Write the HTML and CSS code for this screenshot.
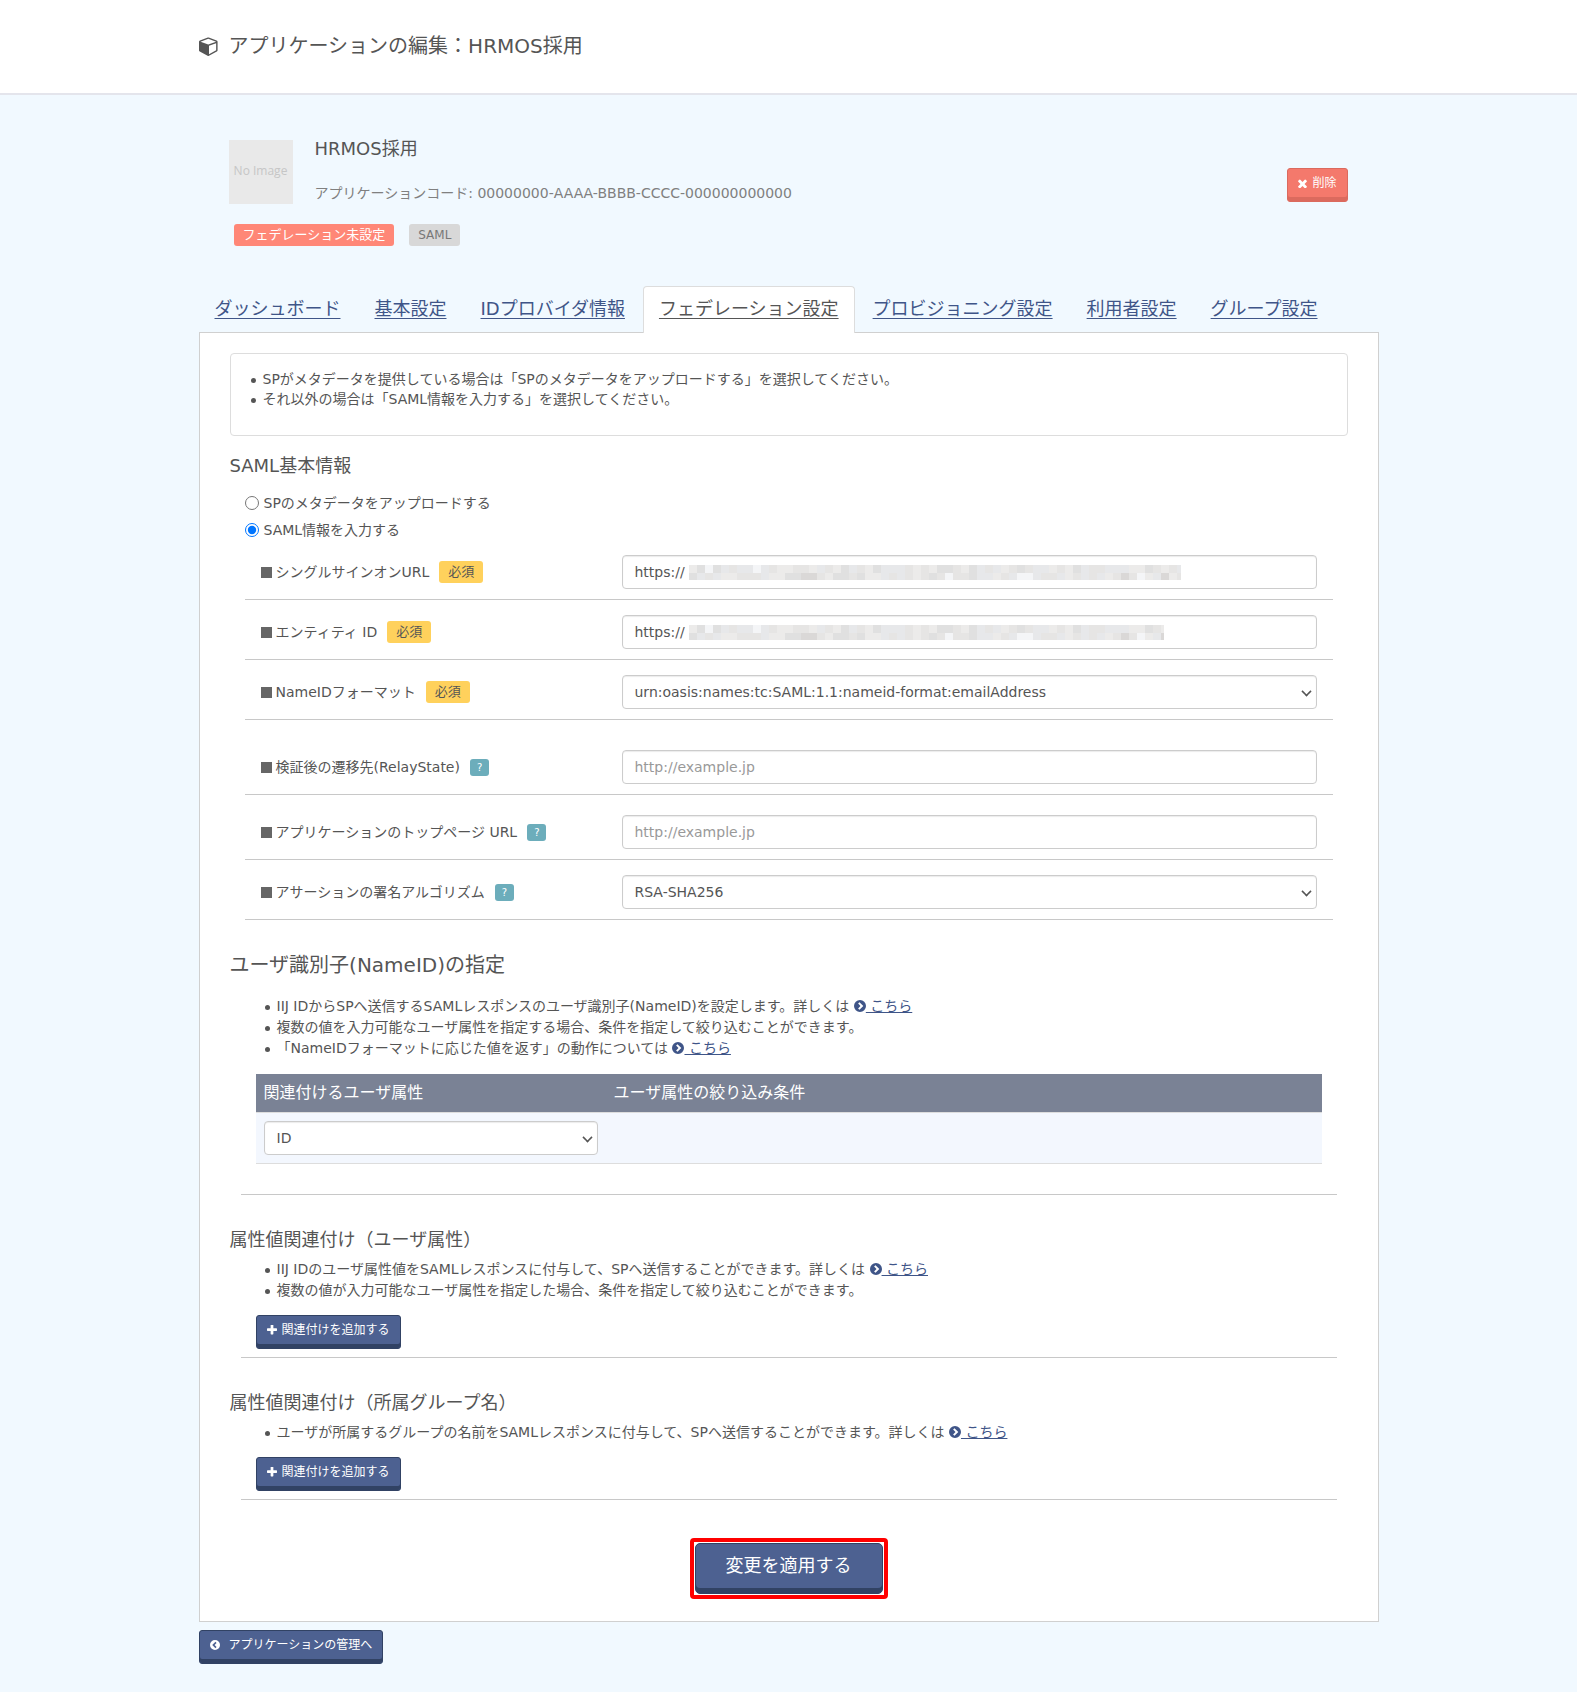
FILE: index.html
```html
<!DOCTYPE html>
<html lang="ja">
<head>
    <meta charset="UTF-8">
    <meta name="viewport" content="width=device-width, initial-scale=1.0">
    <title>アプリケーションの編集：HRMOS採用</title>
    <link rel="stylesheet" href="styles.css">
</head>
<body>
    <!-- shared icons -->
    <svg class="icon-defs" aria-hidden="true">
        <symbol id="icon-cube" viewBox="0 0 1792 1792">
            <path d="M896 1629l640-349v-636l-640 233v752zm-64-865l698-254-698-254-698 254zm832-252v768q0 35-18 65t-49 47l-704 384q-28 16-61 16t-61-16l-704-384q-31-17-49-47t-18-65v-768q0-40 23-73t61-47l704-256q22-8 44-8t44 8l704 256q38 14 61 47t23 73z"/>
        </symbol>
        <symbol id="icon-times" viewBox="290 290 1212 1212">
            <path d="M1490 1322q0 40-28 68l-136 136q-28 28-68 28t-68-28l-294-294-294 294q-28 28-68 28t-68-28l-136-136q-28-28-28-68t28-68l294-294-294-294q-28-28-28-68t28-68l136-136q28-28 68-28t68 28l294 294 294-294q28-28 68-28t68 28l136 136q28 28 28 68t-28 68l-294 294 294 294q28 28 28 68z"/>
        </symbol>
        <symbol id="icon-plus" viewBox="192 192 1408 1408">
            <path d="M1600 736v192q0 40-28 68t-68 28h-416v416q0 40-28 68t-68 28h-192q-40 0-68-28t-28-68v-416h-416q-40 0-68-28t-28-68v-192q0-40 28-68t68-28h416v-416q0-40 28-68t68-28h192q40 0 68 28t28 68v416h416q40 0 68 28t28 68z"/>
        </symbol>
        <symbol id="icon-right" viewBox="0 0 12 12">
            <path fill-rule="evenodd" d="M6 0a6 6 0 1 1 0 12a6 6 0 1 1 0-12zM4.1 3.6L6.5 6L4.1 8.4L5.5 9.8L9.3 6L5.5 2.2z"/>
        </symbol>
        <symbol id="icon-left" viewBox="0 0 12 12">
            <path fill-rule="evenodd" d="M6 0a6 6 0 1 1 0 12a6 6 0 1 1 0-12zM7.9 3.6L5.5 6L7.9 8.4L6.5 9.8L2.7 6L6.5 2.2z"/>
        </symbol>
    </svg>

    <header class="page-header">
        <h1 class="container">
            <svg class="icon-cube"><use href="#icon-cube"/></svg>アプリケーションの編集：HRMOS採用
        </h1>
    </header>

    <main class="container">
        <div class="app-info">
            <div class="app-logo">No Image</div>
            <div class="app-text">
                <h2>HRMOS採用</h2>
                <p>アプリケーションコード: 00000000-AAAA-BBBB-CCCC-000000000000</p>
            </div>
            <button type="button" class="btn btn-danger"><svg class="icon"><use href="#icon-times"/></svg>削除</button>
        </div>
        <div class="app-status">
            <span class="label label-danger">フェデレーション未設定</span>
            <span class="label label-default">SAML</span>
        </div>

        <nav class="tabs">
            <a href="#">ダッシュボード</a>
            <a href="#">基本設定</a>
            <a href="#">IDプロバイダ情報</a>
            <a href="#" class="active">フェデレーション設定</a>
            <a href="#">プロビジョニング設定</a>
            <a href="#">利用者設定</a>
            <a href="#">グループ設定</a>
        </nav>

        <form class="panel">
            <div class="well">
                <ul>
                    <li>SPがメタデータを提供している場合は「SPのメタデータをアップロードする」を選択してください。</li>
                    <li>それ以外の場合は「SAML情報を入力する」を選択してください。</li>
                </ul>
            </div>

            <h3>SAML基本情報</h3>
            <div class="saml-form">
                <label class="radio"><input type="radio" name="saml_type" value="metadata">SPのメタデータをアップロードする</label>
                <label class="radio"><input type="radio" name="saml_type" value="manual" checked>SAML情報を入力する</label>

                <div class="form-row">
                    <div class="form-label">
                        <label for="sso_url">シングルサインオンURL</label>
                        <span class="label label-required">必須</span>
                    </div>
                    <div class="form-field">
                        <input type="text" id="sso_url" class="form-control" value="https://">
                        <svg class="mask" data-width="492"></svg>
                    </div>
                </div>
                <div class="form-row">
                    <div class="form-label">
                        <label for="entity_id">エンティティ ID</label>
                        <span class="label label-required">必須</span>
                    </div>
                    <div class="form-field">
                        <input type="text" id="entity_id" class="form-control" value="https://">
                        <svg class="mask" data-width="475"></svg>
                    </div>
                </div>
                <div class="form-row">
                    <div class="form-label">
                        <label for="nameid_format">NameIDフォーマット</label>
                        <span class="label label-required">必須</span>
                    </div>
                    <div class="form-field select">
                        <select id="nameid_format" class="form-control">
                            <option>urn:oasis:names:tc:SAML:1.1:nameid-format:emailAddress</option>
                        </select>
                    </div>
                </div>
                <div class="form-row form-row-group">
                    <div class="form-label">
                        <label for="relay_state">検証後の遷移先(RelayState)</label>
                        <span class="help">?</span>
                    </div>
                    <div class="form-field">
                        <input type="text" id="relay_state" class="form-control" placeholder="http://example.jp">
                    </div>
                </div>
                <div class="form-row form-row-top">
                    <div class="form-label">
                        <label for="top_url">アプリケーションのトップページ URL</label>
                        <span class="help">?</span>
                    </div>
                    <div class="form-field">
                        <input type="text" id="top_url" class="form-control" placeholder="http://example.jp">
                    </div>
                </div>
                <div class="form-row">
                    <div class="form-label">
                        <label for="algorithm">アサーションの署名アルゴリズム</label>
                        <span class="help">?</span>
                    </div>
                    <div class="form-field select">
                        <select id="algorithm" class="form-control">
                            <option>RSA-SHA256</option>
                        </select>
                    </div>
                </div>
            </div>

            <section class="nameid">
                <h2>ユーザ識別子(NameID)の指定</h2>
                <ul class="notes">
                    <li>IIJ IDからSPへ送信するSAMLレスポンスのユーザ識別子(NameID)を設定します。詳しくは <a href="#"><svg class="icon-link"><use href="#icon-right"/></svg> こちら</a></li>
                    <li>複数の値を入力可能なユーザ属性を指定する場合、条件を指定して絞り込むことができます。</li>
                    <li>「NameIDフォーマットに応じた値を返す」の動作については <a href="#"><svg class="icon-link"><use href="#icon-right"/></svg> こちら</a></li>
                </ul>
                <table>
                    <thead>
                        <tr>
                            <th class="col-attr">関連付けるユーザ属性</th>
                            <th>ユーザ属性の絞り込み条件</th>
                        </tr>
                    </thead>
                    <tbody>
                        <tr>
                            <td>
                                <div class="select">
                                    <select class="form-control" aria-label="関連付けるユーザ属性">
                                        <option>ID</option>
                                    </select>
                                </div>
                            </td>
                            <td></td>
                        </tr>
                    </tbody>
                </table>
            </section>

            <section class="mapping">
                <h3>属性値関連付け（ユーザ属性）</h3>
                <ul class="notes">
                    <li>IIJ IDのユーザ属性値をSAMLレスポンスに付与して、SPへ送信することができます。詳しくは <a href="#"><svg class="icon-link"><use href="#icon-right"/></svg> こちら</a></li>
                    <li>複数の値が入力可能なユーザ属性を指定した場合、条件を指定して絞り込むことができます。</li>
                </ul>
                <button type="button" class="btn btn-primary"><svg class="icon"><use href="#icon-plus"/></svg>関連付けを追加する</button>
            </section>

            <section class="mapping">
                <h3>属性値関連付け（所属グループ名）</h3>
                <ul class="notes">
                    <li>ユーザが所属するグループの名前をSAMLレスポンスに付与して、SPへ送信することができます。詳しくは <a href="#"><svg class="icon-link"><use href="#icon-right"/></svg> こちら</a></li>
                </ul>
                <button type="button" class="btn btn-primary"><svg class="icon"><use href="#icon-plus"/></svg>関連付けを追加する</button>
            </section>

            <div class="submit">
                <div class="highlight">
                    <button type="submit" class="btn btn-primary btn-lg">変更を適用する</button>
                </div>
            </div>
        </form>

        <button type="button" class="btn btn-primary btn-back"><svg class="icon"><use href="#icon-left"/></svg>アプリケーションの管理へ</button>
    </main>

    <script src="mask.js"></script>
</body>
</html>
```

FILE: styles.css
```css
* {
    box-sizing: border-box;
}

body {
    margin: 0;
    background-color: #f1f9ff;
    color: #555;
    font-family: "DejaVu Sans", "Noto Sans CJK JP", sans-serif;
    font-size: 14px;
    line-height: 20px;
}

h1, h2, h3, p, ul {
    margin: 0;
    padding: 0;
    font-weight: normal;
}

a {
    color: #3f5588;
}

.container {
    max-width: 1180px;
    margin: 0 auto;
}

.icon-defs {
    display: none;
}

svg {
    fill: currentColor;
}

/* header */
.page-header {
    padding: 32px 0 33px;
    background-color: white;
    border-bottom: 2px solid #e4e5ec;
}

.page-header h1 {
    display: flex;
    align-items: center;
    gap: 10px;
    font-size: 20px;
    line-height: 28px;
}

.icon-cube {
    width: 20px;
    height: 20px;
}

/* application summary */
.app-info {
    display: flex;
    gap: 22px;
    padding: 45px 31px 0 30px;
}

.app-logo {
    width: 64px;
    height: 64px;
    background-color: #e9e9e9;
    color: #c6c6c6;
    font-family: "Open Sans", sans-serif;
    font-size: 12px;
    line-height: 62px;
    text-align: center;
    white-space: nowrap;
}

.app-text {
    flex: 1;
}

.app-text h2 {
    font-size: 18px;
    line-height: 18px;
}

.app-text p {
    margin-top: 25px;
    color: #808080;
}

.app-status {
    display: flex;
    gap: 15px;
    padding: 20px 35px 40px;
}

.label {
    padding: 0 9px;
    border-radius: 3px;
    font-size: 13px;
    line-height: 22px;
}

.label-danger {
    background-color: #ff8777;
    color: white;
}

.label-default {
    background-color: #d8d8d8;
    color: #777;
    font-size: 12px;
}

.label-required {
    background-color: #ffd15c;
}

/* buttons */
.btn {
    display: inline-flex;
    align-items: center;
    gap: 5px;
    height: 34px;
    padding: 0 10px 4px;
    border: 1px solid;
    border-radius: 3px;
    color: white;
    font-family: inherit;
    font-size: 12px;
    line-height: 18px;
    cursor: pointer;
}

.btn .icon {
    width: 10px;
    height: 10px;
}

.btn-primary {
    background-color: #4d6191;
    border-color: #314264;
    box-shadow: inset 0 -4px 0 #314264;
}

.btn-danger {
    margin-top: 28px;
    background-color: #f4796c;
    border-color: #db6a5e;
    box-shadow: inset 0 -4px 0 #db6a5e;
}

.btn-danger .icon {
    width: 9px;
    height: 9px;
}

.btn-lg {
    height: 51px;
    padding: 0 30px 5px;
    border-radius: 5px;
    box-shadow: inset 0 -5px 0 #314264;
    font-size: 18px;
}

.btn-back {
    gap: 9px;
    margin: 8px 0 28px;
}

/* tabs */
.tabs {
    display: flex;
    gap: 2px;
    margin-bottom: -1px;
}

.tabs a {
    padding: 9px 15px 11px;
    border: 1px solid transparent;
    border-bottom: 0;
    border-radius: 4px 4px 0 0;
    font-size: 18px;
    line-height: 26px;
    text-underline-offset: 3px;
    white-space: nowrap;
}

.tabs .active {
    position: relative;
    background-color: white;
    border-color: #ddd;
    color: #555;
}

.panel {
    padding: 20px 30px 22px;
    background-color: white;
    border: 1px solid #d0d0d0;
}

.panel h2 {
    font-size: 20px;
    line-height: 26px;
}

.panel h3 {
    font-size: 18px;
    line-height: 26px;
}

.well {
    padding: 15px 32px 26px;
    border: 1px solid #ddd;
    border-radius: 4px;
}

.well + h3 {
    margin-top: 17px;
}

/* SAML form */
.saml-form {
    padding: 14px 15px 0;
}

.radio {
    display: flex;
    align-items: center;
    gap: 5px;
    margin-bottom: 7px;
}

.radio input {
    width: 14px;
    height: 14px;
    margin: 0;
}

.form-row {
    display: grid;
    grid-template-columns: 361px 1fr;
    padding: 15px 16px 10px;
    border-bottom: 1px solid #c8c8c8;
}

.radio + .form-row {
    padding-top: 8px;
}

.form-row-group {
    padding-top: 30px;
}

.form-row-top {
    padding-top: 20px;
}

.form-label {
    display: flex;
    align-items: center;
    gap: 10px;
}

.form-label::before {
    content: "";
    width: 11px;
    height: 11px;
    margin-right: -6px;
    background-color: #666;
}

.help {
    padding: 0 7px;
    border-radius: 3px;
    background-color: #6cadbb;
    color: white;
    font-size: 10px;
    line-height: 17px;
}

.form-field {
    position: relative;
}

.form-control {
    display: block;
    width: 100%;
    height: 34px;
    padding: 0 12px;
    border: 1px solid #ccc;
    border-radius: 4px;
    background-color: white;
    box-shadow: inset 0 1px 1px rgba(0,0,0,0.08);
    color: #555;
    font-family: inherit;
    font-size: 14px;
    appearance: none;
}

.form-control::placeholder {
    color: #999;
}

.select {
    position: relative;
}

.select::after {
    content: "";
    position: absolute;
    top: 12px;
    right: 6px;
    width: 7px;
    height: 7px;
    border: solid #555;
    border-width: 0 2px 2px 0;
    transform: rotate(45deg) scale(0.8);
    pointer-events: none;
}

.mask {
    position: absolute;
    top: 10px;
    left: 67px;
    height: 15px;
}

/* lists */
.well ul, .notes {
    list-style: none;
}

.well li, .notes li {
    position: relative;
}

.well li::before, .notes li::before {
    content: "";
    position: absolute;
    top: 9px;
    left: -12px;
    width: 5px;
    height: 5px;
    border-radius: 50%;
    background-color: #555;
}

.icon-link {
    width: 12px;
    height: 12px;
    vertical-align: -1px;
}

.nameid, .mapping {
    border-bottom: 1px solid #c8c8c8;
    margin: 0 11px;
}

.nameid h2, .mapping h3 {
    margin-left: -11px;
}

.notes {
    padding-left: 36px;
    line-height: 21px;
}

.nameid {
    padding: 32px 0 30px;
}

.nameid .notes {
    margin: 18px 0 15px;
}

table {
    width: calc(100% - 30px);
    margin-left: 15px;
    border-collapse: collapse;
}

th {
    padding: 8px;
    background-color: #7a8295;
    color: white;
    font-size: 16px;
    font-weight: normal;
    line-height: 22px;
    text-align: left;
}

td {
    padding: 8px;
    background-color: #f3f7fe;
    border: solid #ddd;
    border-width: 1px 0;
}

.col-attr {
    width: 350px;
}

.mapping {
    padding: 32px 0 8px;
}

.mapping .notes {
    margin: 6px 0 14px;
}

.mapping .btn {
    display: flex;
    margin-left: 15px;
}

.submit {
    display: flex;
    justify-content: center;
    margin-top: 38px;
}

.highlight {
    padding: 1px;
    border: 4px solid #ff0000;
    border-radius: 4px;
}

.highlight .btn {
    display: block;
}
```

FILE: mask.js
```js
// two rows of 8px cells, top row first
const rows = [
    'ebfbdcddfdceeccedcebdcebdddcecebbcebdcdecbcddecebdccdddeebcecdbcddcecd',
    'bdcdeecccdeebbaacebbcbeedcdcecbcfccbddecdffdccdecdcdecacfedaecdcebdcce'
];
const colors = {
    a: '#dad8d7',
    b: '#e0e0e0',
    c: '#e6e5e4',
    d: '#e7e8ea',
    e: '#ecebea',
    f: '#f4f5f7'
};

document.querySelectorAll('.mask').forEach((svg) => {
    svg.setAttribute('width', svg.dataset.width);
    let html = '';
    rows.forEach((row, y) => {
        [...row].forEach((cell, x) => {
            html += `<rect x="${x * 8}" y="${y * 8}" width="8" height="8" fill="${colors[cell]}"/>`;
        });
    });
    svg.innerHTML = html;
});
```
